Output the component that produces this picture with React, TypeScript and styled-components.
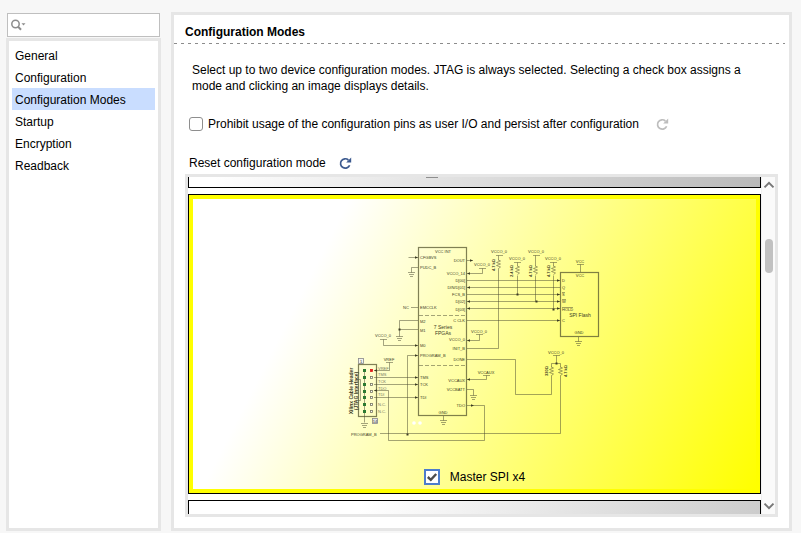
import React from "react";
import styled, { createGlobalStyle } from "styled-components";

const GlobalStyle = createGlobalStyle`
  * { box-sizing: border-box; }
  body {
    margin: 0;
    background: #f7f7f7;
    color: #000;
    font-family: "Liberation Sans", Arial, sans-serif;
    font-size: 12px;
    line-height: 16px;
  }
`;

const Page = styled.div`
  display: flex;
  gap: 10px;
  min-height: 100vh;
  padding: 12px 9px 2px 6px;
`;

const Sidebar = styled.aside`
  display: flex;
  flex-direction: column;
  flex: none;
  width: 155px;
`;

const SearchBox = styled.label`
  display: flex;
  align-items: center;
  height: 24px;
  margin: 1px;
  padding-left: 3px;
  border: 1px solid #bfbfbf;
  background: #fff;
`;

const SearchInput = styled.input`
  flex: 1;
  width: 100%;
  min-width: 0;
  border: 0;
  outline: 0;
  background: transparent;
  font: inherit;
`;

const Nav = styled.nav`
  display: flex;
  flex-direction: column;
  flex: 1;
  padding: 3px;
  border: 3px solid #e6e6e6;
  background: #fff;
`;

const NavItem = styled.button<{ $active?: boolean }>`
  height: 22px;
  padding: 2px 3px 0;
  border: 0;
  background: ${(p) => (p.$active ? "#c9ddff" : "transparent")};
  color: inherit;
  font: inherit;
  font-size: 12px;
  line-height: 20px;
  text-align: left;
`;

const Main = styled.main`
  display: flex;
  flex-direction: column;
  flex: 1;
  min-width: 0;
  border: 3px solid #e6e6e6;
  background: #fff;
`;

const Header = styled.header`
  padding: 9px 11px 3px;
`;

const Title = styled.h1`
  margin: 0;
  font-size: 12px;
  line-height: 16px;
`;

const Divider = styled.div`
  height: 1px;
  margin-right: 4px;
  background: repeating-linear-gradient(90deg, #8c8c8c 0 3px, transparent 3px 7px);
`;

const Intro = styled.p`
  margin: 18px 18px 22px;
`;

const OptionRow = styled.div`
  display: flex;
  align-items: center;
  gap: 17px;
  height: 16px;
  margin: 0 15px 23px;
`;

const ResetRow = styled.div`
  display: flex;
  align-items: center;
  gap: 13px;
  height: 16px;
  margin: 0 15px 3px;
`;

const OptionLabel = styled.label`
  display: flex;
  align-items: center;
  gap: 5px;
`;

const CheckBox = styled.input`
  flex: none;
  width: 14px;
  height: 14px;
  margin: 0;
  border: 1px solid #8e8e8e;
  border-radius: 3px;
  background: #fff;
  appearance: none;
`;

const IconButton = styled.button<{ $color: string }>`
  display: flex;
  padding: 0;
  border: 0;
  background: none;
  color: ${(p) => p.$color};
`;

const ScrollPane = styled.section`
  display: flex;
  flex: 1;
  margin: 0 11px 11px;
  border: 3px solid #e6e6e6;
`;

const CardList = styled.div`
  display: flex;
  flex-direction: column;
  flex: 1;
  gap: 6px;
  min-width: 0;
`;

const PreviousCard = styled.div`
  display: flex;
  justify-content: center;
  height: 11px;
  border: solid #000;
  border-width: 0 1px 1px;
  background: linear-gradient(117deg, #fff 24%, #b9b9b9) bottom / 100% 300px;
`;

const ClippedCheck = styled.span`
  width: 12px;
  height: 1px;
  margin-right: 86px;
  background: #8e8e8e;
`;

const NextCard = styled.div`
  flex: 1;
  min-height: 14px;
  border: solid #000;
  border-width: 1px 1px 0;
  background: linear-gradient(117deg, #fff 24%, #b9b9b9) top / 100% 300px;
`;

const SelectedCard = styled.article`
  display: flex;
  flex-direction: column;
  align-items: center;
  padding: 4px;
  border: 1px solid #000;
  background: #ff0;
`;

const CardBody = styled.div`
  display: flex;
  flex-direction: column;
  align-items: center;
  gap: 23px;
  width: 100%;
  padding: 37px 0 4px;
  background: linear-gradient(117deg, #fff 22%, #ff0);
`;

const ModeLabel = styled.label`
  display: flex;
  align-items: center;
  gap: 10px;
`;

const ModeCheck = styled.span`
  display: grid;
  width: 16px;
  height: 16px;
  > * { grid-area: 1 / 1; }
  svg { margin: 2px; pointer-events: none; }
`;

const ModeInput = styled.input`
  width: 16px;
  height: 16px;
  margin: 0;
  border: 2px solid #4d7ccb;
  background: #fff;
  appearance: none;
`;

const Scrollbar = styled.div`
  display: flex;
  flex-direction: column;
  align-items: center;
  width: 14px;
  border-left: 1px solid #f0f0f0;
  background: #fafafa;
`;

const ScrollButton = styled.button`
  display: flex;
  padding: 3px 0;
  border: 0;
  background: none;
`;

const Track = styled.div`
  flex: 1;
  padding-top: 46px;
`;

const Thumb = styled.div`
  width: 8px;
  height: 34px;
  border-radius: 4px;
  background: #c1c1c1;
`;

const Refresh = () => (
  <svg width="13" height="13" viewBox="0 0 13 13" aria-hidden="true">
    <path d="M10.6 8.2A4.7 4.7 0 1 1 9.4 3" fill="none" stroke="currentColor" strokeWidth="1.7" />
    <path d="M12.2 0.6V5.6H7.2Z" fill="currentColor" />
  </svg>
);

const SearchIcon = () => (
  <svg width="15" height="12" viewBox="0 0 15 12" aria-hidden="true">
    <circle cx="4.5" cy="5" r="3.7" fill="none" stroke="#8c8c8c" strokeWidth="1.5" />
    <path d="M7 7.6L10 10.8" stroke="#8c8c8c" strokeWidth="2" />
    <path d="M10.5 4.2H14.5L12.5 6.4Z" fill="#8c8c8c" />
  </svg>
);

const Chevron = ({ up }: { up?: boolean }) => (
  <svg width="12" height="10" viewBox="0 0 12 10" aria-hidden="true">
    <path d={up ? "M1.5 7.4L6 2.9L10.5 7.4" : "M1.5 2.6L6 7.1L10.5 2.6"} fill="none" stroke="#777" strokeWidth="2" />
  </svg>
);

const Drawing = styled.svg`
  display: block;
  font-family: "Liberation Sans", Arial, sans-serif;
  font-size: 4px;
  fill: #3c3c24;
  .wire { fill: none; stroke: #4a4a30; stroke-opacity: 0.5; stroke-width: 1; }
  .box { fill: none; stroke: #55552e; stroke-opacity: 0.75; stroke-width: 1.2; }
  .big { font-size: 5px; }
  .turned { font-weight: bold; }
  .soft { fill: #77775c; }
`;

type Anchor = "start" | "middle" | "end";
type Label = [string, number, number, Anchor];

const labels: Label[] = [
  ["VCC INT", 443, 253, "middle"],
  ["CFGBVS", 420, 259, "start"],
  ["PUDC_B", 420, 269, "start"],
  ["EMCCLK", 420, 309, "start"],
  ["M2", 420, 323, "start"],
  ["M1", 420, 332, "start"],
  ["M0", 420, 347, "start"],
  ["PROGRAM_B", 420, 357, "start"],
  ["TMS", 420, 379, "start"],
  ["TCK", 420, 386, "start"],
  ["TDI", 420, 399, "start"],
  ["DOUT", 465, 262, "end"],
  ["VCCO_14", 465, 275, "end"],
  ["D[00]", 465, 282, "end"],
  ["DIN/D[01]", 465, 289, "end"],
  ["FCS_B", 465, 296, "end"],
  ["D[02]", 465, 303, "end"],
  ["D[03]", 465, 311, "end"],
  ["C CLK", 465, 322, "end"],
  ["VCCO_0", 465, 341, "end"],
  ["INIT_B", 465, 350, "end"],
  ["DONE", 465, 361, "end"],
  ["VCCAUX", 465, 382, "end"],
  ["VCCBATT", 465, 391, "end"],
  ["TDO", 465, 407, "end"],
  ["GND", 443, 414, "middle"],
  ["NC", 406, 309, "middle"],
  ["VCCO_0", 383, 337, "middle"],
  ["VREF", 389, 361, "middle"],
  ["VCCO_0", 482, 266, "middle"],
  ["VCCO_0", 479, 333, "middle"],
  ["VCCAUX", 486, 374, "middle"],
  ["VCCO_0", 499, 253, "middle"],
  ["VCCO_0", 517, 260, "middle"],
  ["VCCO_0", 536, 253, "middle"],
  ["VCCO_0", 553, 260, "middle"],
  ["VCCO_0", 556, 354, "middle"],
  ["VCC", 580, 263, "middle"],
  ["VCC", 580, 277, "middle"],
  ["GND", 579, 334, "middle"],
  ["D", 562, 282, "start"],
  ["Q", 562, 289, "start"],
  ["S", 562, 296, "start"],
  ["W", 562, 303, "start"],
  ["HOLD", 562, 311, "start"],
  ["C", 562, 322, "start"],
  ["PROGRAM_B", 351, 436, "start"],
];

const pinLabels: [string, number][] = [
  ["VREF", 370], ["TMS", 376], ["TCK", 383], ["TDO", 390], ["TDI", 396], ["N.C.", 406], ["N.C.", 413],
];

const rotated: [string, number, number, string][] = [
  ["4.7 kΩ", 495, 265, "turned"],
  ["2.4 kΩ", 513, 271, "turned"],
  ["4.7 kΩ", 532, 271, "turned"],
  ["4.7 kΩ", 550, 271, "turned"],
  ["330Ω", 548, 371, "turned"],
  ["4.7 kΩ", 567, 371, "turned"],
  ["Xilinx Cable Header", 353, 391, "turned big"],
  ["(JTAG Interface)", 358, 391, "turned big"],
];

const wires = [
  "M408.5 257.5H418", "M418 267.5H411.5V272.5", "M467 260.5H473", "M467 273.5H482.5V268.5",
  "M467 280.5H560", "M467 287.5H560", "M467 294.5H560", "M467 301.5H560", "M467 308.5H560", "M467 320.5H560",
  "M411 307.5H418", "M418 320.5H399.5V336.5M399.5 329.5H418", "M418 345.5H383.5V339.5",
  "M467 340.5H479.5V334.5", "M467 348.5H498.5V268.5M498.5 260.5V255.5",
  "M418 355.5H407.5V433.5", "M467 359.5H515.5V394.5H551.5V375.5M551.5 367.5V363.5H560.5V367.5M560.5 375.5V433.5H380",
  "M556.5 363.5V355.5", "M374 377.5H418", "M374 384.5H418", "M374 397.5H418", "M467 379.5H486.5V375.5",
  "M467 389.5H473.5V395.5", "M467 405.5H484.5V440.5H388.5V390.5H374", "M443.5 416V420.5",
  "M374 370.5H389.5V362.5", "M364.5 370.5V422.5", "M580.5 264.5V272", "M578.5 337V341.5",
  "M517.5 262.5V266.5M517.5 275.5V294.5", "M535.5 255.5V266.5M535.5 275.5V301.5", "M553.5 262.5V266.5M553.5 275.5V308.5",
  "M358.5 379.5H360.5V400.5H358.5",
].join("");

const bars: [number, number][] = [
  [383, 339], [389, 362], [482, 268], [479, 334], [486, 375], [499, 255], [517, 262], [536, 255], [553, 262], [556, 355], [580, 264],
];
const grounds: [number, number][] = [[411, 272], [399, 336], [443, 420], [473, 395], [364, 423], [578, 341]];
const resistors: [number, number][] = [[498, 260], [517, 266], [535, 266], [553, 266], [551, 367], [560, 367]];
const nodes: [number, number][] = [[399, 329], [407, 434], [517, 294], [536, 301], [553, 309], [556, 363]];
const rightArrows: [number, number][] = [
  [418, 257], [473, 260], [560, 280], [560, 294], [560, 301], [560, 308], [560, 320], [418, 345], [418, 355], [418, 377], [418, 384], [418, 397], [474, 405],
];
const leftArrows: [number, number][] = [
  [467, 273], [467, 287], [467, 301], [467, 308], [467, 340], [467, 379], [374, 370], [374, 390],
];
const pinRows = [370, 377, 384, 391, 397, 404, 411];

const Schematic = () => (
  <Drawing width="270" height="210" viewBox="340 236 270 210" role="img" aria-label="Master SPI x4 wiring">
    <rect className="box" x="418.5" y="247.5" width="48" height="168" />
    <rect className="box" x="560.5" y="272.5" width="38" height="64" />
    <rect className="box" x="358.5" y="364.5" width="18" height="52" />
    <path className="wire" d={wires} />
    <path className="wire" strokeDasharray="4 2" d="M419 315.5H466M419 365.5H466" />
    <path className="wire" d={bars.map(([x, y]) => `M${x - 3} ${y + 0.5}h7`).join("")} />
    <path className="wire" d={grounds.map(([x, y]) => `M${x - 3} ${y + 0.5}h7M${x - 2} ${y + 2.5}h5M${x - 1} ${y + 4.5}h3`).join("")} />
    <path className="wire" d={resistors.map(([x, y]) => `M${x + 0.5} ${y}l2 1l-4 1.5l4 1.5l-4 1.5l4 1.5l-2 1.5`).join("")} />
    <path d={nodes.map(([x, y]) => `M${x - 0.5} ${y - 0.5}h2v2h-2z`).join("")} />
    <path d={rightArrows.map(([x, y]) => `M${x} ${y + 0.5}l-3 -1.3v2.6z`).join("")} />
    <path d={leftArrows.map(([x, y]) => `M${x} ${y + 0.5}l3 -1.3v2.6z`).join("")} />
    <path className="wire" d="M562 292.5h3M562 299.5h4M562 307.5h11" />
    {pinRows.map((y, i) => (
      <g key={y}>
        <rect x="363" y={y - 1} width="3" height="3" fill="#2c7a32" />
        <rect x="370.5" y={y - 0.5} width="2" height="2" fill={i === 0 ? "#e01818" : "#fff"} stroke={i === 0 ? "#e01818" : "#777760"} strokeWidth="0.8" />
      </g>
    ))}
    <rect x="358.5" y="358.5" width="5" height="5" fill="#f3f3f0" stroke="#88888a" strokeWidth="0.8" />
    <text x="361" y="363" textAnchor="middle">1</text>
    <rect x="372.5" y="418.5" width="5" height="5" fill="#e4e4ea" stroke="#88888a" strokeWidth="0.8" />
    <text x="375" y="423" textAnchor="middle">14</text>
    <circle cx="414" cy="423" r="1.8" fill="#fff" />
    <circle cx="420" cy="423" r="1.8" fill="#fff" />
    {labels.map(([text, x, y, anchor]) => (
      <text key={`${text}-${x}-${y}`} x={x} y={y} textAnchor={anchor}>{text}</text>
    ))}
    {pinLabels.map(([text, y]) => (
      <text key={y} className="soft" x="378" y={y}>{text}</text>
    ))}
    {rotated.map(([text, x, y, cls]) => (
      <text key={`${x}-${y}`} className={cls} textAnchor="middle" transform={`translate(${x} ${y}) rotate(-90)`}>{text}</text>
    ))}
    <text className="big" x="443" y="329" textAnchor="middle">7 Series</text>
    <text className="big" x="443" y="335" textAnchor="middle">FPGAs</text>
    <text className="big" x="580" y="317" textAnchor="middle">SPI Flash</text>
  </Drawing>
);

const sections = ["General", "Configuration", "Configuration Modes", "Startup", "Encryption", "Readback"];

export default function App() {
  const [active, setActive] = React.useState("Configuration Modes");
  const [persist, setPersist] = React.useState(false);
  const [spi, setSpi] = React.useState(true);
  return (
    <>
      <GlobalStyle />
      <Page>
        <Sidebar>
          <SearchBox>
            <SearchIcon />
            <SearchInput type="text" aria-label="Search" />
          </SearchBox>
          <Nav>
            {sections.map((name) => (
              <NavItem key={name} $active={name === active} onClick={() => setActive(name)}>{name}</NavItem>
            ))}
          </Nav>
        </Sidebar>
        <Main>
          <Header><Title>Configuration Modes</Title></Header>
          <Divider />
          <Intro>
            Select up to two device configuration modes. JTAG is always selected. Selecting a check box assigns a
            <br />
            mode and clicking an image displays details.
          </Intro>
          <OptionRow>
            <OptionLabel>
              <CheckBox type="checkbox" checked={persist} onChange={(e) => setPersist(e.target.checked)} />
              Prohibit usage of the configuration pins as user I/O and persist after configuration
            </OptionLabel>
            <IconButton $color="#bdbdbd" aria-label="Reset option" disabled><Refresh /></IconButton>
          </OptionRow>
          <ResetRow>
            <span>Reset configuration mode</span>
            <IconButton $color="#3c5a8f" aria-label="Reset configuration mode"><Refresh /></IconButton>
          </ResetRow>
          <ScrollPane>
            <CardList>
              <PreviousCard><ClippedCheck /></PreviousCard>
              <SelectedCard>
                <CardBody>
                  <Schematic />
                  <ModeLabel>
                    <ModeCheck>
                      <ModeInput type="checkbox" checked={spi} onChange={(e) => setSpi(e.target.checked)} />
                      {spi && (
                        <svg width="12" height="12" viewBox="0 0 12 12" aria-hidden="true">
                          <path d="M1.8 6L4.8 8.8L10.2 3" fill="none" stroke="#4c4c4c" strokeWidth="2.4" />
                        </svg>
                      )}
                    </ModeCheck>
                    Master SPI x4
                  </ModeLabel>
                </CardBody>
              </SelectedCard>
              <NextCard />
            </CardList>
            <Scrollbar>
              <ScrollButton aria-label="Scroll up"><Chevron up /></ScrollButton>
              <Track><Thumb /></Track>
              <ScrollButton aria-label="Scroll down"><Chevron /></ScrollButton>
            </Scrollbar>
          </ScrollPane>
        </Main>
      </Page>
    </>
  );
}
